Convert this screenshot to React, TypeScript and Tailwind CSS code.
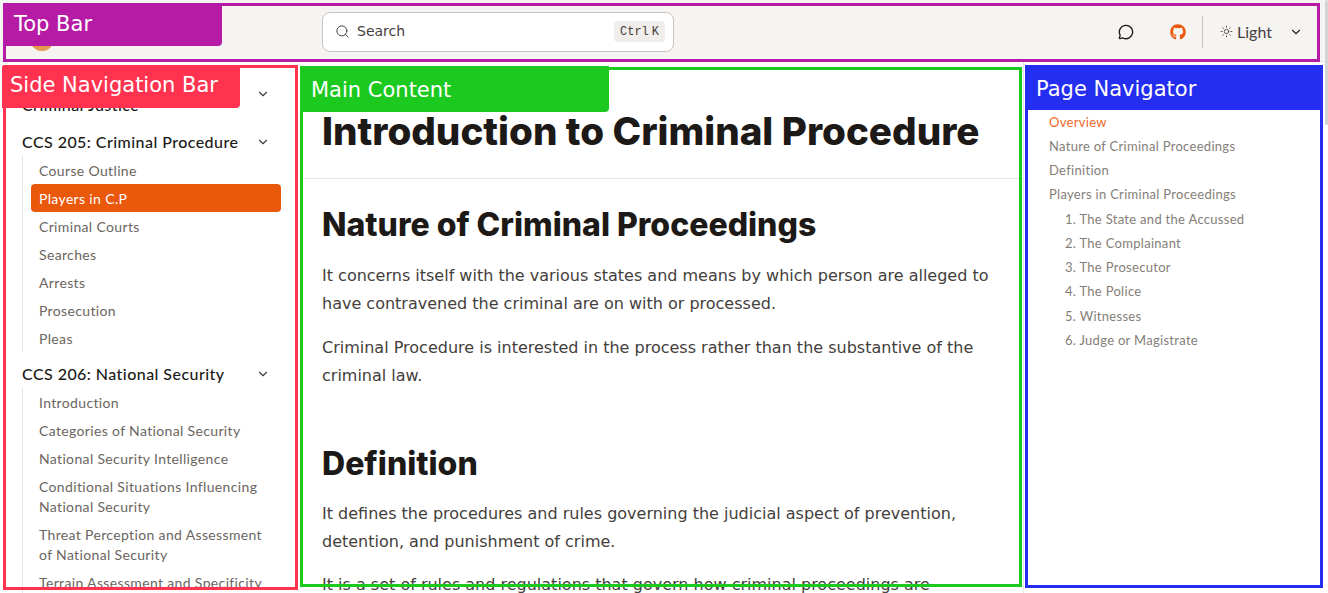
import { ChevronDown, MessageCircle, Search, Sun } from 'lucide-react';
import { FaGithub } from 'react-icons/fa';

const courses = [
  { title: 'CCS 204: Introduction to Criminal Justice', items: [] as string[] },
  {
    title: 'CCS 205: Criminal Procedure',
    items: ['Course Outline', 'Players in C.P', 'Criminal Courts', 'Searches', 'Arrests', 'Prosecution', 'Pleas'],
  },
  {
    title: 'CCS 206: National Security',
    items: [
      'Introduction',
      'Categories of National Security',
      'National Security Intelligence',
      'Conditional Situations Influencing National Security',
      'Threat Perception and Assessment of National Security',
      'Terrain Assessment and Specificity',
    ],
  },
];

const toc = [
  { label: 'Overview', sub: false },
  { label: 'Nature of Criminal Proceedings', sub: false },
  { label: 'Definition', sub: false },
  { label: 'Players in Criminal Proceedings', sub: false },
  { label: '1. The State and the Accussed', sub: true },
  { label: '2. The Complainant', sub: true },
  { label: '3. The Prosecutor', sub: true },
  { label: '4. The Police', sub: true },
  { label: '5. Witnesses', sub: true },
  { label: '6. Judge or Magistrate', sub: true },
];

function TopBar() {
  return (
    <header className="flex h-[62px] items-center border-b border-[#e7e5e4] bg-[#f5f4f2] pr-[25px] pt-[2px]">
      <div className="w-[322px] shrink-0 pl-[30px] pt-[14px]">
        <div className="h-[24px] w-[24px] rounded-full bg-[#e59a4f]" />
      </div>
      <div className="flex h-[40px] w-[352px] items-center rounded-lg border border-[#c9c4bf] bg-white pl-[12px] pr-[8px] text-[#44403c]">
        <Search size={15} strokeWidth={1.6} />
        <span className="ml-[7px] text-[14px]">Search</span>
        <kbd className="ml-auto flex h-[21px] items-center gap-[3px] rounded bg-[#f0edeb] px-[6px] font-['Liberation_Mono',monospace] text-[12px]">
          <span>Ctrl</span>
          <span>K</span>
        </kbd>
      </div>
      <div className="ml-auto flex items-center">
        <MessageCircle size={16} strokeWidth={2} className="text-[#1c1917]" />
        <FaGithub size={16} className="ml-[36px] text-[#ea580c]" />
        <div className="ml-[16px] h-[32px] w-px bg-[#c9c4bf]" />
        <Sun size={13} strokeWidth={1.6} className="ml-[17px] text-[#44403c]" />
        <span className="ml-[4px] font-['Lato',sans-serif] text-[16px] text-[#44403c]">Light</span>
        <ChevronDown size={14} strokeWidth={2} className="ml-[17px] text-[#292524]" />
      </div>
    </header>
  );
}

function SideNav() {
  return (
    <nav className="h-[531px] w-[302px] shrink-0 overflow-hidden pl-[22px] pr-[21px] pt-[7px] font-['Lato',sans-serif]">
      {courses.map((course, i) => (
        <div key={course.title} className={i === 0 ? 'mb-[9px]' : 'mb-[8px]'}>
          <div className="flex items-center justify-between pr-[11px] text-[16px] font-medium leading-[22px] tracking-[0.45px] text-[#1c1917]">
            <span className="w-[225px] py-[3px]">{course.title}</span>
            <ChevronDown size={14} strokeWidth={2} className="text-[#44403c]" />
          </div>
          {course.items.length > 0 && (
            <ul className="border-l border-[#e7e5e4] pl-[8px]">
              {course.items.map((item) => (
                <li
                  key={item}
                  className={
                    item === 'Players in C.P'
                      ? 'rounded bg-[#ea580c] px-[8px] pt-[5px] pb-[3px] text-[14px] leading-[20px] tracking-[0.35px] text-white'
                      : 'px-[8px] pt-[5px] pb-[3px] text-[14px] leading-[20px] tracking-[0.35px] text-[#6b6560]'
                  }
                >
                  {item}
                </li>
              ))}
            </ul>
          )}
        </div>
      ))}
    </nav>
  );
}

function MainContent() {
  return (
    <main className="h-[531px] w-[722px] shrink-0 overflow-hidden border-r border-[#e7e5e4]">
      <div className="flex h-[117px] items-end border-b border-[#e7e5e4] px-[20px] pb-[23px]">
        <h1 className="font-['Inter',sans-serif] text-[38.6px] font-extrabold leading-[48px] whitespace-nowrap text-[#1c1917]">
          Introduction to Criminal Procedure
        </h1>
      </div>
      <div className="px-[20px] pt-[26px] font-['DejaVu_Sans',sans-serif] text-[16px] leading-[28px] text-[#44403c]">
        <h2 className="font-['Inter',sans-serif] text-[32px] font-extrabold leading-[40px] text-[#1c1917]">
          Nature of Criminal Proceedings
        </h2>
        <p className="mt-[17px]">
          It concerns itself with the various states and means by which person are alleged to have contravened the
          criminal are on with or processed.
        </p>
        <p className="mt-[16px]">
          Criminal Procedure is interested in the process rather than the substantive of the criminal law.
        </p>
        <h2 className="mt-[54px] font-['Inter',sans-serif] text-[32px] font-extrabold leading-[40px] text-[#1c1917]">
          Definition
        </h2>
        <p className="mt-[16px]">
          It defines the procedures and rules governing the judicial aspect of prevention, detention, and punishment of
          crime.
        </p>
        <p className="mt-[15px]">
          It is a set of rules and regulations that govern how criminal proceedings are
        </p>
      </div>
    </main>
  );
}

function PageNav() {
  return (
    <aside className="flex-1 pl-[25px] pt-[47.6px] font-['Lato',sans-serif] text-[13px] leading-[24.25px] tracking-[0.3px] text-[#857e78]">
      {toc.map((entry, i) => (
        <div
          key={entry.label}
          className={i === 0 ? 'text-[#f0682a]' : entry.sub ? 'pl-[16px]' : ''}
        >
          {entry.label}
        </div>
      ))}
    </aside>
  );
}

function Region({ label, box, tag }: { label: string; box: string; tag: string }) {
  return (
    <>
      <div className={box} />
      <div className={tag}>{label}</div>
    </>
  );
}

export default function App() {
  return (
    <div className="relative h-[593px] overflow-hidden bg-white font-['DejaVu_Sans',sans-serif]">
      <TopBar />
      <div className="flex">
        <SideNav />
        <MainContent />
        <PageNav />
      </div>
      <div className="absolute right-0 top-0 h-[125px] w-[3px] rounded-full bg-[#d4d4d4]" />

      {/* region annotations sit over the page */}
      <Region
        label="Top Bar"
        box="absolute left-[3px] top-[3px] h-[59px] w-[1317px] border-[3px] border-[#b51ba5]"
        tag="absolute left-[3px] top-[3px] flex h-[43px] w-[219px] items-center rounded-br-sm bg-[#b51ba5] pl-[11px] pt-[1px] text-[21px] text-white"
      />
      <Region
        label="Side Navigation Bar"
        box="absolute left-[3px] top-[65px] h-[525px] w-[295px] border-[3px] border-[#ff3350]"
        tag="absolute left-[2px] top-[66px] flex h-[42px] w-[238px] items-center rounded-br-sm bg-[#ff3350] pb-[3px] pl-[8px] text-[21px] text-white"
      />
      <Region
        label="Main Content"
        box="absolute left-[300px] top-[67px] h-[520px] w-[722px] border-[3px] border-[#1bc91f]"
        tag="absolute left-[300px] top-[66px] flex h-[46px] w-[309px] items-center rounded-br-sm bg-[#1bc91f] pl-[11px] pt-[3px] text-[21px] text-white"
      />
      <Region
        label="Page Navigator"
        box="absolute left-[1025px] top-[65px] h-[523px] w-[298px] border-[3px] border-[#242ef0]"
        tag="absolute left-[1025px] top-[66px] flex h-[44px] w-[298px] items-center bg-[#242ef0] pl-[11px] pt-[3px] text-[21px] text-white"
      />
    </div>
  );
}
